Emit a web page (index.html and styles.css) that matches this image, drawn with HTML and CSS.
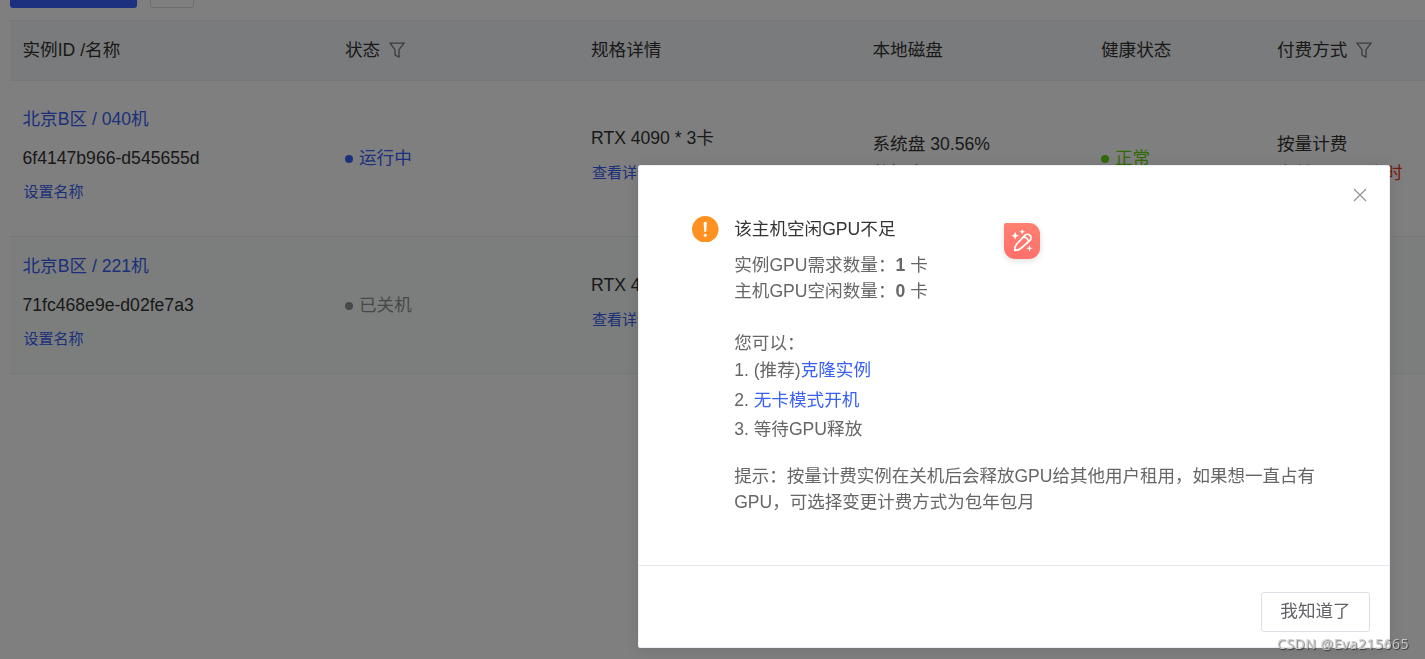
FILE: index.html
```html
<!DOCTYPE html>
<html lang="zh-CN">
<head>
  <meta charset="utf-8">
  <meta name="viewport" content="width=device-width, initial-scale=1">
  <title>容器实例</title>
  <link rel="stylesheet" href="styles.css">
</head>
<body>

  <div class="page">
    <div class="toolbar">
      <div class="btn-primary"></div>
      <div class="btn-plain"></div>
    </div>

    <div class="table">
      <div class="row head">
        <div class="cell">实例ID /名称</div>
        <div class="cell with-icon">状态
          <svg class="filter" viewBox="0 0 16 16"><path d="M1 1.2H15L10 7.6V15L6 13V7.6Z"/></svg>
        </div>
        <div class="cell">规格详情</div>
        <div class="cell">本地磁盘</div>
        <div class="cell">健康状态</div>
        <div class="cell with-icon">付费方式
          <svg class="filter" viewBox="0 0 16 16"><path d="M1 1.2H15L10 7.6V15L6 13V7.6Z"/></svg>
        </div>
      </div>

      <div class="row first">
        <div class="cell name">
          <a class="host">北京B区 / 040机</a>
          <span class="uid">6f4147b966-d545655d</span>
          <a class="small">设置名称</a>
        </div>
        <div class="cell"><span class="status running"><i></i>运行中</span></div>
        <div class="cell spec">
          <span>RTX 4090 * 3卡</span>
          <a class="small">查看详情</a>
        </div>
        <div class="cell lines"><span>系统盘 30.56%</span><span>数据盘 0.00%</span></div>
        <div class="cell"><span class="status ok"><i></i>正常</span></div>
        <div class="cell lines"><span>按量计费</span><span class="price">实付￥5.94/小时</span></div>
      </div>

      <div class="row second">
        <div class="cell name">
          <a class="host">北京B区 / 221机</a>
          <span class="uid">71fc468e9e-d02fe7a3</span>
          <a class="small">设置名称</a>
        </div>
        <div class="cell"><span class="status off"><i></i>已关机</span></div>
        <div class="cell spec">
          <span>RTX 4090 * 1卡</span>
          <a class="small">查看详情</a>
        </div>
      </div>
    </div>
  </div>

  <div class="overlay"></div>

  <!-- Dialog -->
  <div class="dialog">
    <svg class="close" viewBox="0 0 14 14"><path d="M1 1L13 13M13 1L1 13"/></svg>
    <div class="dialog-body">
      <svg class="warn" viewBox="0 0 26 26">
        <circle cx="13" cy="13" r="13" fill="#ff9121"/>
        <path d="M11.4 7.2a1.6 1.6 0 0 1 3.2 0L14 14.8a1 1 0 0 1-2 0Z" fill="#fff"/>
        <circle cx="13" cy="18.8" r="1.5" fill="#fff"/>
      </svg>
      <div class="content">
        <div class="title">该主机空闲GPU不足</div>
        <div class="line">实例GPU需求数量：<b>1</b> 卡</div>
        <div class="line">主机GPU空闲数量：<b>0</b> 卡</div>
        <div class="line can">您可以：</div>
        <div class="options">
          <div>1. (推荐)<a>克隆实例</a></div>
          <div>2. <a>无卡模式开机</a></div>
          <div>3. 等待GPU释放</div>
        </div>
        <div class="tip">提示：按量计费实例在关机后会释放GPU给其他用户租用，如果想一直占有<br>GPU，可选择变更计费方式为包年包月</div>
      </div>
    </div>
    <div class="dialog-footer">
      <button class="btn-ok">我知道了</button>
    </div>

    <!-- Floating edit badge -->
    <div class="magic">
      <svg viewBox="0 0 36 36" fill="none" stroke="#fff" stroke-width="1.7" stroke-linejoin="round" stroke-linecap="round">
        <path d="M10.8 27.4Q10.4 23.6 12.6 21.2L20.6 12.6A3.4 3.4 0 0 1 26.2 17.2L17.4 25Q14.6 27.4 10.8 27.4ZM19.6 13.8Q23.4 14.4 24.8 18.4"/>
        <path fill="#fff" stroke="none" d="M11.2 8.6L12.3 11.7L15.2 12.7L12.3 13.7L11.2 16.8L10.1 13.7L7.2 12.7L10.1 11.7ZM18.2 5.8L19 8L21.1 8.8L19 9.6L18.2 11.8L17.4 9.6L15.3 8.8L17.4 8ZM25.5 22L26.4 24.4L28.7 25.2L26.4 26L25.5 28.4L24.6 26L22.3 25.2L24.6 24.4Z"/>
      </svg>
    </div>
  </div>

  <div class="watermark">CSDN @Eva215665</div>

</body>
</html>
```
FILE: styles.css
```css
* {
  box-sizing: border-box;
}
body {
  margin: 0;
  height: 659px;
  overflow: hidden;
  background: #fff;
  color: #333;
  font-family: "Liberation Sans", "Noto Sans CJK SC", sans-serif;
  font-size: 17.6px;
  line-height: 26px;
}
a {
  color: #3860f4;
}
.page {
  padding-left: 10px;
}
/* Bottom edge of the toolbar above the table */
.toolbar {
  display: flex;
  gap: 13px;
  height: 20px;
}
.btn-primary {
  width: 127px;
  height: 8px;
  background: #3860ff;
  border-radius: 0 0 3px 3px;
}
.btn-plain {
  width: 44px;
  height: 8px;
  border: 1px solid #dcdfe6;
  border-top: 0;
  border-radius: 0 0 3px 3px;
}
/* Instance table */
.row {
  display: grid;
  grid-template-columns: 322.5px 246px 281.5px 228.5px 176px 160px;
  align-items: center;
  border-bottom: 1px solid #ebeef5;
  white-space: nowrap;
}
.cell {
  padding-left: 12.5px;
}
.head {
  height: 61px;
  padding-bottom: 2px;
  background: #f5f7fa;
  border-top: 1px solid #ebeef5;
}
.with-icon {
  display: flex;
  align-items: center;
  gap: 9px;
}
.filter {
  width: 16px;
  height: 16px;
  fill: none;
  stroke: #77777f;
  stroke-width: 1.3;
}
.first {
  height: 156px;
}
.second {
  height: 137px;
  background: #f8fdfa;
}
.name,
.spec,
.lines {
  display: flex;
  flex-direction: column;
}
.name {
  padding-bottom: 11px;
}
.second .name {
  padding-bottom: 10px;
}
.host {
  line-height: 39px;
}
.uid {
  line-height: 38px;
}
.name .small {
  line-height: 30px;
}
.small {
  padding-left: 1px;
  font-size: 15px;
  line-height: 28px;
}
.spec {
  padding-bottom: 7px;
}
.spec span {
  margin-bottom: 6px;
  line-height: 30px;
}
.lines {
  padding-bottom: 2px;
  line-height: 28px;
}
.lines span + span {
  position: relative;
  top: 1px;
}
.price {
  color: #f0371e;
  font-size: 17.4px;
}
.status {
  display: flex;
  align-items: center;
  gap: 6px;
  padding-bottom: 2px;
}
.second .status {
  padding-bottom: 0;
}
.status i {
  width: 8px;
  height: 8px;
  margin-top: 3px;
  border-radius: 50%;
  background: currentColor;
}
.second .status i {
  margin-top: 1px;
}
.running {
  color: #3860ff;
}
.ok {
  color: #67d411;
}
.off {
  color: #909090;
}
.overlay {
  position: fixed;
  inset: 0;
  background: rgba(0, 0, 0, 0.5);
}
/* Dialog */
.dialog {
  position: absolute;
  left: 638px;
  top: 165px;
  width: 752px;
  height: 483px;
  display: flex;
  flex-direction: column;
  background: #fff;
  border: 1px solid #ebeef5;
  border-radius: 2px;
  box-shadow: 0 2px 15px rgba(0, 0, 0, 0.1);
  color: #666;
}
.close {
  position: absolute;
  right: 22px;
  top: 22px;
  width: 14px;
  height: 14px;
  stroke: #909399;
  stroke-width: 1.2;
}
.dialog-body {
  flex: 1;
  display: flex;
  align-items: flex-start;
  gap: 15.7px;
  padding: 49.5px 50px 0 53px;
}
.warn {
  flex: none;
  width: 26.5px;
  height: 26.5px;
}
.content {
  padding-top: 0.5px;
  white-space: nowrap;
}
.title {
  margin-bottom: 10px;
  color: #333;
}
.can {
  margin-top: 26px;
}
.options {
  line-height: 29.5px;
}
.tip {
  margin-top: 18px;
  font-size: 17.53px;
}
.dialog-footer {
  display: flex;
  justify-content: flex-end;
  height: 82px;
  padding: 26px 19px 0 0;
  border-top: 1px solid #e4e7ed;
}
.btn-ok {
  width: 109px;
  height: 40px;
  padding: 0 0 5px;
  background: #fff;
  border: 1px solid #dcdfe6;
  border-radius: 3px;
  color: #606266;
  font-family: inherit;
  font-size: 17.6px;
}
.magic {
  position: absolute;
  left: 365px;
  top: 57px;
  width: 36px;
  height: 36px;
  border-radius: 2px 11px 11px 11px;
  background: linear-gradient(#ff8070, #ff706c);
  box-shadow: 0 2px 6px rgba(0, 0, 0, 0.12);
}
.magic svg {
  display: block;
}
.watermark {
  position: absolute;
  right: 16px;
  bottom: 5px;
  color: rgba(205, 205, 205, 0.9);
  font-family: "Noto Sans", sans-serif;
  font-size: 14px;
  line-height: 20px;
  letter-spacing: 0.5px;
  text-shadow: 1px 1px 1px rgba(0, 0, 0, 0.55);
}
```
